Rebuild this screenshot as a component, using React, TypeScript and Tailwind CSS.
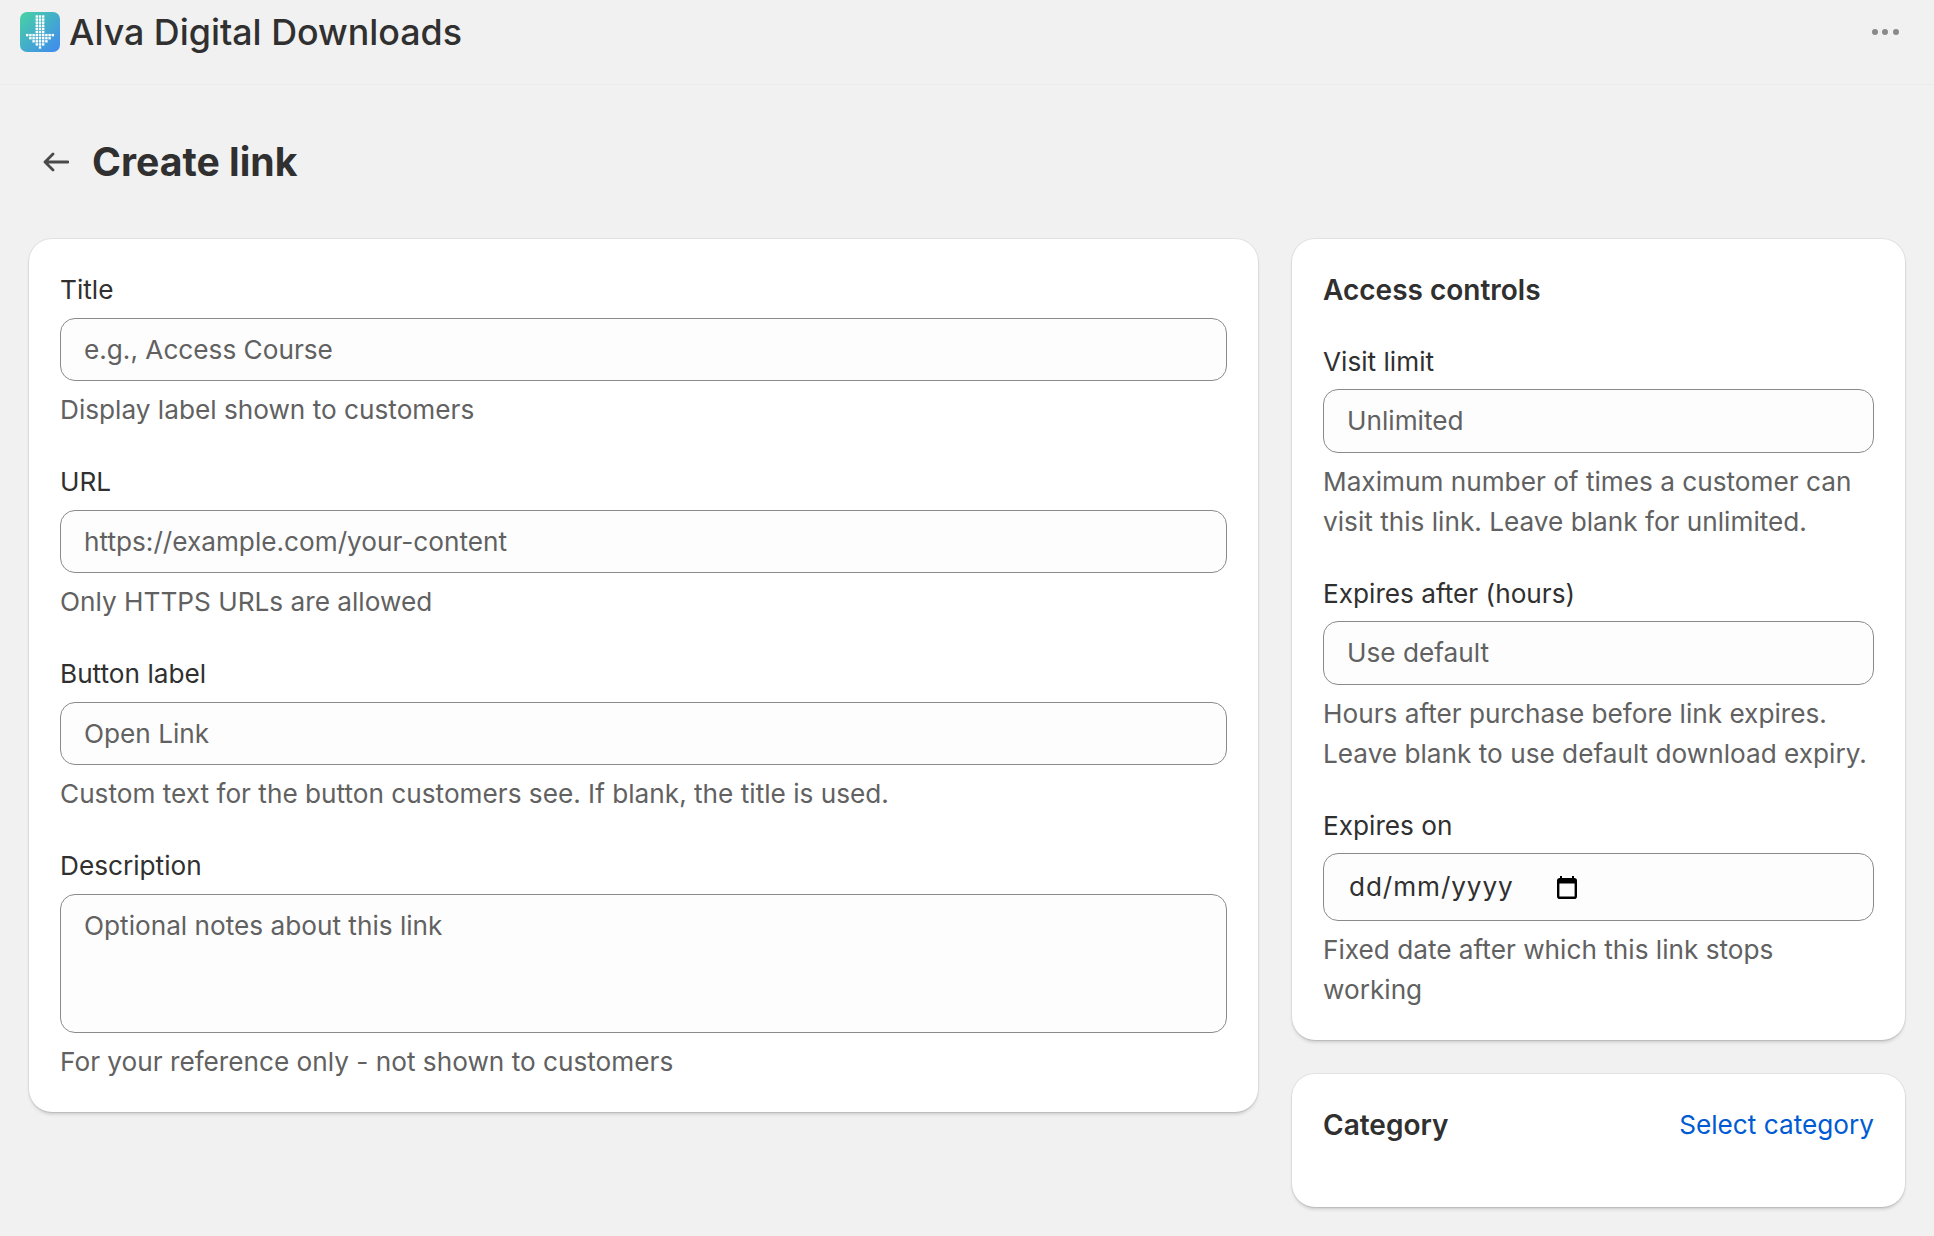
const INTER = "font-['Inter',sans-serif]";

const CARD =
  "rounded-[23px] bg-white shadow-[0_3px_4px_-2px_rgba(26,26,26,0.3),0_0_0_1px_rgba(0,0,0,0.06)]";

const DOT_ROWS = [3, 3, 3, 3, 3, 3, 9, 7, 5, 3, 1];

function Logo() {
  return (
    <svg width="40" height="40" viewBox="0 0 40 40" className="shrink-0 rounded-[7px]">
      <defs>
        <linearGradient id="logo-bg" x1="0" y1="0" x2="1" y2="1">
          <stop offset="0" stopColor="#47d3a3" />
          <stop offset="1" stopColor="#4088f2" />
        </linearGradient>
      </defs>
      <rect width="40" height="40" fill="url(#logo-bg)" />
      {DOT_ROWS.map((count, row) =>
        Array.from({ length: count }).map((_, i) => (
          <rect
            key={`${row}-${i}`}
            x={20 + (i - (count - 1) / 2) * 3.2 - 1.2}
            y={4.5 + row * 3.1 - 1.2}
            width="2.4"
            height="2.4"
            fill="#fff"
          />
        ))
      )}
    </svg>
  );
}

function Field({
  label,
  placeholder,
  help,
}: {
  label: string;
  placeholder: string;
  help: string;
}) {
  return (
    <div>
      <label className="block text-[26.2px] leading-[40px] text-[#303030]">{label}</label>
      <input
        placeholder={placeholder}
        className="mt-[7.5px] block h-[63.5px] w-full rounded-[15px] border border-[#8a8a8a] bg-[#fdfdfd] px-[23px] text-[26.2px] text-[#303030] outline-none placeholder:text-[#616161] placeholder:opacity-100"
      />
      <p className="mt-[9px] text-[26.2px] leading-[40px] text-[#616161]">{help}</p>
    </div>
  );
}

export default function App() {
  return (
    <div className={`${INTER} h-[1236px] overflow-hidden bg-[#f1f1f1] text-[#303030]`}>
      <header className="flex h-[85px] items-start justify-between border-b border-[#ebebeb] pl-[20px] pr-[35px] pt-[12px]">
        <div className="flex items-center gap-[9px]">
          <Logo />
          <span className="text-[35.8px] font-medium leading-[40px]">Alva Digital Downloads</span>
        </div>
        <div className="mt-[17px] flex gap-[4.6px]">
          <span className="size-[6px] rounded-full bg-[#8a8a8a]" />
          <span className="size-[6px] rounded-full bg-[#8a8a8a]" />
          <span className="size-[6px] rounded-full bg-[#8a8a8a]" />
        </div>
      </header>

      <main className="px-[29px]">
        <div className="flex h-[154px] items-center gap-[23px] pl-[14px]">
          <svg width="26" height="20" viewBox="0 0 26 20" fill="none" stroke="#4a4a4a" strokeWidth="2.8" strokeLinecap="round" strokeLinejoin="round">
            <path d="M25 10H2M10 2l-8 8 8 8" />
          </svg>
          <h1 className="text-[39.2px] font-bold leading-[48px]">Create link</h1>
        </div>

        <div className="flex items-start gap-[34px]">
          <section className={`${CARD} flex-1 p-[31px] pb-[30px]`}>
            <div className="flex flex-col gap-[32px]">
              <Field label="Title" placeholder="e.g., Access Course" help="Display label shown to customers" />
              <Field label="URL" placeholder="https://example.com/your-content" help="Only HTTPS URLs are allowed" />
              <Field label="Button label" placeholder="Open Link" help="Custom text for the button customers see. If blank, the title is used." />
              <div>
                <label className="block text-[26.2px] leading-[40px] text-[#303030]">Description</label>
                <textarea
                  placeholder="Optional notes about this link"
                  className="mt-[7.5px] block h-[139px] w-full resize-none rounded-[15px] border border-[#8a8a8a] bg-[#fdfdfd] px-[23px] py-[11px] text-[26.2px] leading-[40px] outline-none placeholder:text-[#616161] placeholder:opacity-100"
                />
                <p className="mt-[9px] text-[26.2px] leading-[40px] text-[#616161]">For your reference only - not shown to customers</p>
              </div>
            </div>
          </section>

          <aside className="flex w-[613px] shrink-0 flex-col gap-[34.5px]">
            <section className={`${CARD} p-[31px] pb-[30px]`}>
              <h2 className="mb-[31.5px] text-[28px] font-semibold leading-[40px]">Access controls</h2>
              <div className="flex flex-col gap-[32px]">
                <Field label="Visit limit" placeholder="Unlimited" help="Maximum number of times a customer can visit this link. Leave blank for unlimited." />
                <Field label="Expires after (hours)" placeholder="Use default" help="Hours after purchase before link expires. Leave blank to use default download expiry." />
                <div>
                  <label className="block text-[26.2px] leading-[40px] text-[#303030]">Expires on</label>
                  <div className="mt-[7.5px] flex h-[68px] items-center rounded-[15px] border border-[#8a8a8a] bg-[#fdfdfd] pl-[25px] text-[26.2px] text-[#303030]">
                    <span className="tracking-[0.9px]">dd/mm/yyyy</span>
                    <svg className="ml-[43px]" width="20" height="23" viewBox="0 0 20 23" fill="none">
                      <rect x="1.2" y="3.2" width="17.6" height="18.6" rx="1.6" stroke="#000" strokeWidth="2.4" />
                      <path d="M1 5.5h18" stroke="#000" strokeWidth="4" />
                      <path d="M4 0v3M16 0v3" stroke="#000" strokeWidth="2" />
                    </svg>
                  </div>
                  <p className="mt-[8.5px] text-[26.2px] leading-[40px] text-[#616161]">Fixed date after which this link stops working</p>
                </div>
              </div>
            </section>

            <section className={`${CARD} h-[133px] px-[31px] pt-[31px]`}>
              <div className="flex items-center justify-between">
                <h2 className="text-[28px] font-semibold leading-[40px]">Category</h2>
                <a href="#category" className="text-[26.2px] leading-[40px] text-[#005bd3]">Select category</a>
              </div>
            </section>
          </aside>
        </div>
      </main>
    </div>
  );
}
